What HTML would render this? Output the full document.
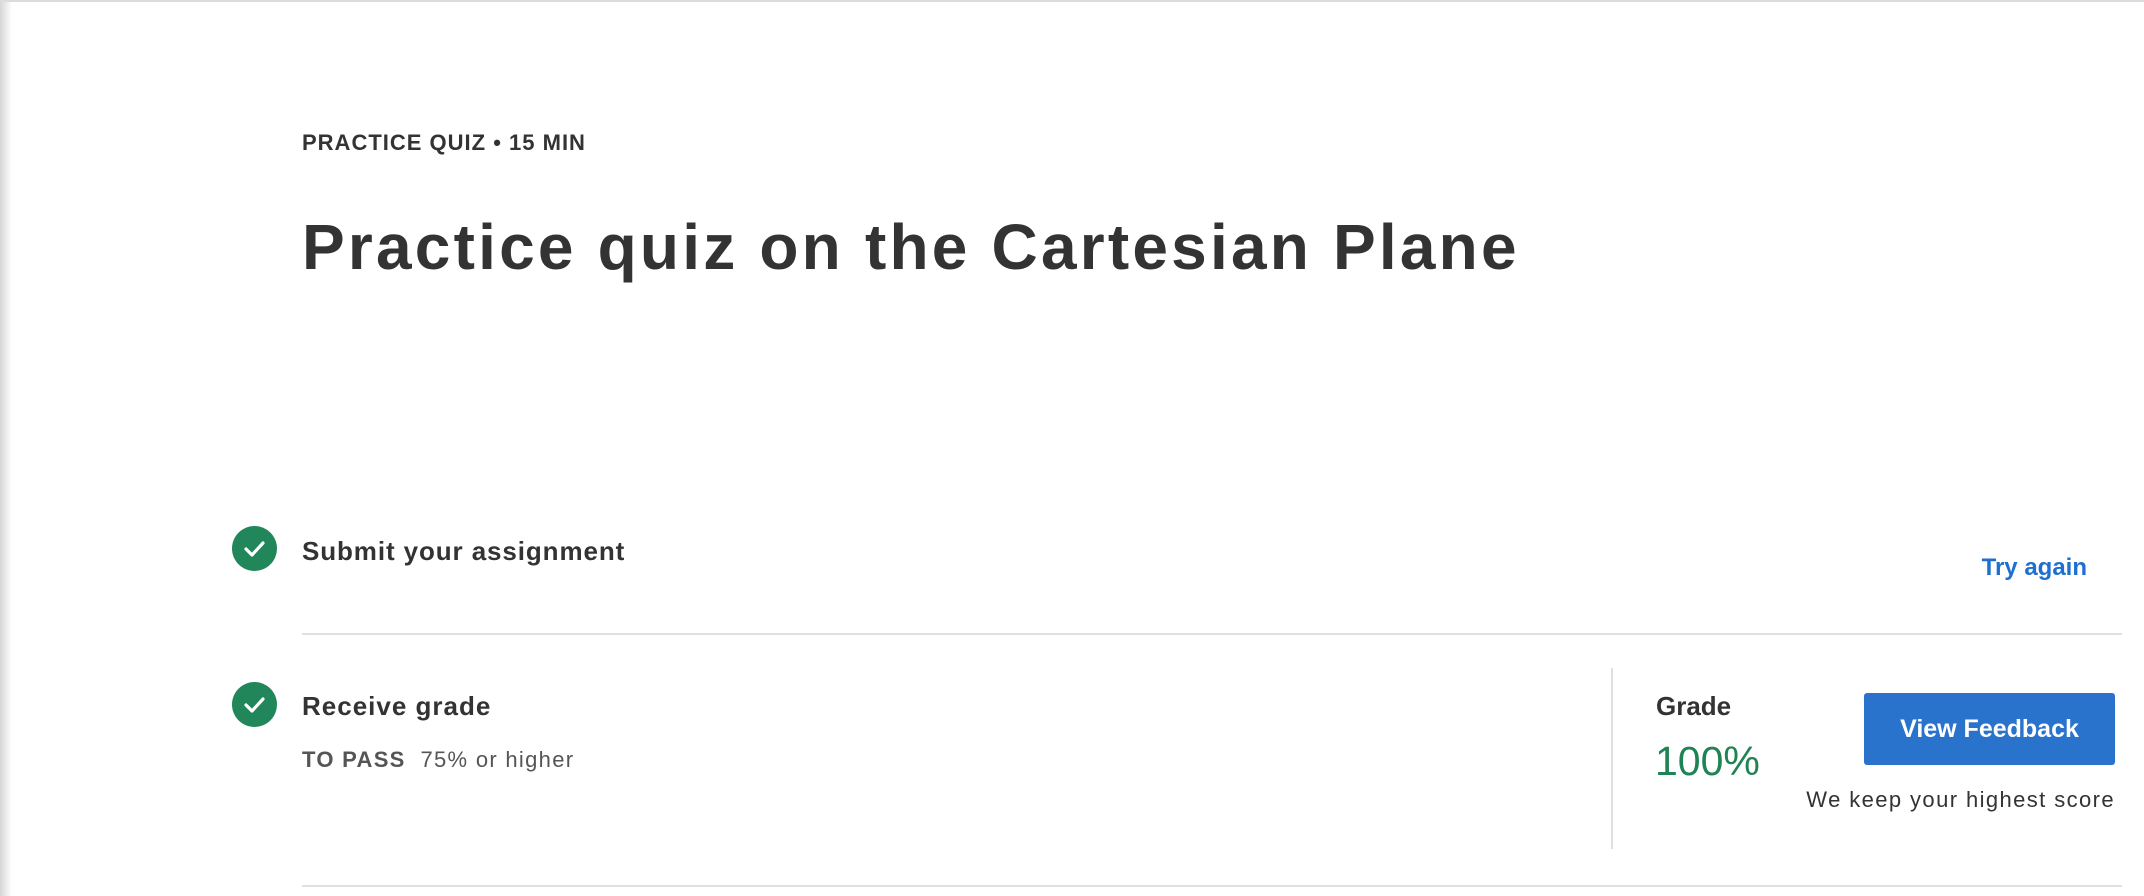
<!DOCTYPE html>
<html><head><meta charset="utf-8"><style>
*{margin:0;padding:0;box-sizing:border-box}
body{width:2144px;height:896px;background:#fff;position:relative;overflow:hidden;font-family:"Liberation Sans",Arial,sans-serif;color:#333}
.shadow{position:absolute;left:0;top:0;width:12px;height:896px;background:linear-gradient(to right,#d6d6d6,#fff)}
.topline{position:absolute;left:0;top:0;width:2144px;height:2px;background:#dcdcdc}
.a{position:absolute;white-space:nowrap}
.chk{position:absolute;width:45px;height:45px;border-radius:50%;background:#218659}
.chk svg{position:absolute;left:0;top:0}
.hr{position:absolute;left:302px;width:1820px;height:2px;background:#e0e0e0}
</style></head><body>
<div class="shadow"></div><div class="topline"></div>
<div class="a" style="left:302px;top:130px;font-size:22px;font-weight:bold;color:#333;letter-spacing:1px">PRACTICE QUIZ • 15 MIN</div>
<div class="a" style="left:302px;top:210px;font-size:64px;font-weight:bold;color:#333;letter-spacing:3.2px">Practice quiz on the Cartesian Plane</div>

<div class="chk" style="left:232px;top:526px"><svg width="45" height="45"><path d="M14 23 L20 29 L31 17" fill="none" stroke="#fff" stroke-width="3.2" stroke-linecap="round" stroke-linejoin="round"/></svg></div>
<div class="a" style="left:302px;top:536px;font-size:26px;font-weight:bold;color:#333;letter-spacing:0.9px">Submit your assignment</div>
<div class="a" style="right:57px;top:554px;font-size:24px;font-weight:bold;color:#1f6fd0">Try again</div>
<div class="hr" style="top:633px"></div>

<div class="chk" style="left:232px;top:682px"><svg width="45" height="45"><path d="M14 23 L20 29 L31 17" fill="none" stroke="#fff" stroke-width="3.2" stroke-linecap="round" stroke-linejoin="round"/></svg></div>
<div class="a" style="left:302px;top:691px;font-size:26px;font-weight:bold;color:#333;letter-spacing:1px">Receive grade</div>
<div class="a" style="left:302px;top:747px;font-size:22px;color:#555;letter-spacing:1.3px"><b>TO PASS</b>&nbsp;&nbsp;75% or higher</div>

<div class="a" style="left:1611px;top:668px;width:2px;height:181px;background:#e0e0e0"></div>
<div class="a" style="left:1656px;top:691px;font-size:26px;font-weight:bold;color:#333">Grade</div>
<div class="a" style="left:1655px;top:738px;font-size:41px;color:#1f8354">100%</div>
<div class="a" style="left:1864px;top:693px;width:251px;height:72px;background:#2a73cc;border-radius:3px;color:#fff;font-size:25px;font-weight:bold;text-align:center;line-height:72px">View Feedback</div>
<div class="a" style="right:29px;top:787px;font-size:22px;color:#333;letter-spacing:1.4px">We keep your highest score</div>
<div class="hr" style="top:885px"></div>
</body></html>
